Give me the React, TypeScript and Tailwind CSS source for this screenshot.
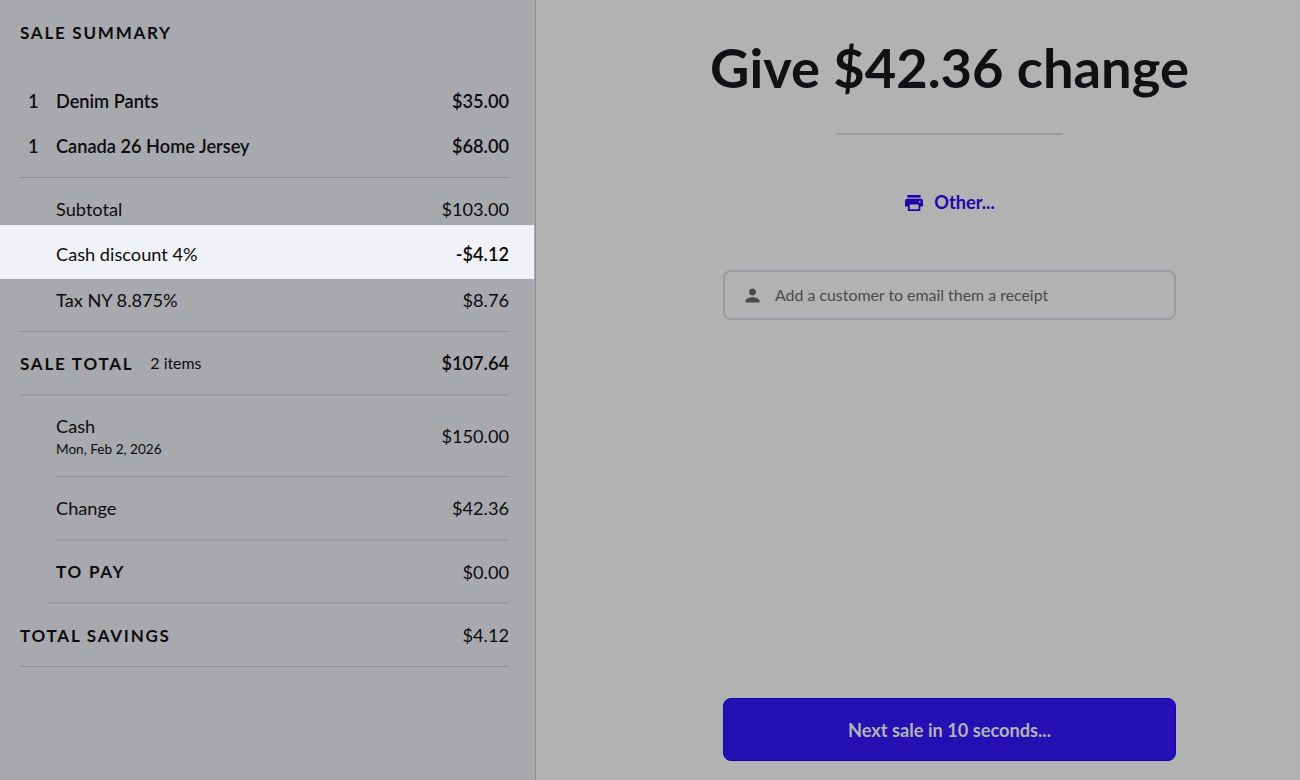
import type { ReactNode } from 'react';

interface LineProps {
  label: ReactNode;
  amount: string;
  className: string;
  amountClassName?: string;
}

function Line({ label, amount, className, amountClassName = '' }: LineProps) {
  return (
    <div className={`flex items-center justify-between ${className}`}>
      <div>{label}</div>
      <span className={amountClassName}>{amount}</span>
    </div>
  );
}

interface Item {
  quantity: number;
  name: string;
  price: string;
}

const items: Item[] = [
  { quantity: 1, name: 'Denim Pants', price: '$35.00' },
  { quantity: 1, name: 'Canada 26 Home Jersey', price: '$68.00' },
];

function SaleSummary() {
  return (
    <section className="h-full w-[536px] shrink-0 border-r border-[#8e8f94] bg-[#a8a9ad] text-[18.2px] leading-[22px]">
      <h2 className="ml-5 pt-[22px] text-[17px] font-bold tracking-[1.75px]">SALE SUMMARY</h2>

      <div className="mr-[26px] ml-5 mt-[34px] h-[100px] border-b border-[#8c8d91]">
        {items.map((item) => (
          <div key={item.name} className="flex h-[45px] items-center font-semibold">
            <span className="w-9 pl-2">{item.quantity}</span>
            <span className="grow">{item.name}</span>
            <span>{item.price}</span>
          </div>
        ))}
      </div>

      <Line label="Subtotal" amount="$103.00" className="mr-[26px] ml-14 h-[47px] pt-3.5" />
      <Line
        label="Cash discount 4%"
        amount="-$4.12"
        className="mr-px h-[54px] bg-[#f1f2f8] pt-1 pr-[25px] pl-14"
        amountClassName="font-semibold"
      />
      <Line
        label="Tax NY 8.875%"
        amount="$8.76"
        className="mr-[26px] ml-5 h-[53px] border-b border-[#8c8d91] pb-[11px] pl-9"
      />
      <Line
        label={
          <div className="flex items-center">
            <span className="pt-px text-[17px] font-bold tracking-[1.75px]">SALE TOTAL</span>
            <span className="ml-[17px] text-[15.9px]">2 items</span>
          </div>
        }
        amount="$107.64"
        className="mr-[26px] ml-5 h-16 border-b-2 border-[#9a9b9f]"
        amountClassName="font-semibold"
      />
      <Line
        label={
          <div className="pt-[3px]">
            <div>Cash</div>
            <div className="pt-px text-[13.6px]">Mon, Feb 2, 2026</div>
          </div>
        }
        amount="$150.00"
        className="mr-[26px] ml-14 h-[81px] border-b border-[#8c8d91]"
      />
      <Line
        label="Change"
        amount="$42.36"
        className="mr-[26px] ml-14 h-16 border-b-2 border-[#9a9b9f]"
      />
      <Line
        label={<span className="text-[17px] font-bold tracking-[1.75px]">TO PAY</span>}
        amount="$0.00"
        className="mr-[26px] ml-12 h-[63px] border-b-2 border-[#9a9b9f] pl-2"
      />
      <Line
        label={<span className="text-[17px] font-bold tracking-[1.75px]">TOTAL SAVINGS</span>}
        amount="$4.12"
        className="mr-[26px] ml-5 h-[63px] border-b border-[#8c8d91]"
      />
    </section>
  );
}

function PrinterIcon() {
  return (
    <svg viewBox="0 0 18 16" className="h-4 w-[18px]" fill="currentColor" fillRule="evenodd">
      <path d="M2.2 0h13.4v2.6H2.2z" />
      <path d="M2.4 3.8h13.2A2.4 2.4 0 0 1 18 6.2v5.3h-2.7V16H2.9v-4.5H0V6.2a2.4 2.4 0 0 1 2.4-2.4zM4.7 9.6v4.6h8.8V9.6zM14.7 6a.9.9 0 1 0 0 1.8.9.9 0 0 0 0-1.8z" />
    </svg>
  );
}

function PersonIcon() {
  return (
    <svg viewBox="0 0 24 24" className="size-[21px]" fill="currentColor">
      <path d="M12 12c2.21 0 4-1.79 4-4s-1.79-4-4-4-4 1.79-4 4 1.79 4 4 4zm0 2c-2.67 0-8 1.34-8 4v2h16v-2c0-2.66-5.33-4-8-4z" />
    </svg>
  );
}

function ChangeDue() {
  return (
    <main className="flex h-full grow flex-col items-center pr-[37px] pl-[100px]">
      <h1 className="mt-8 text-[54.3px] leading-[70px] font-bold whitespace-nowrap text-[#111113]">
        Give $42.36 change
      </h1>
      <div className="mt-[31px] h-[2px] w-[227px] bg-[#9c9c9e]" />

      <button className="mt-[57px] flex h-[22px] items-center gap-[11px] pl-px text-[18.2px] font-bold text-[#1e05ad]">
        <PrinterIcon />
        Other...
      </button>

      <div className="mt-[56px] flex h-[50px] w-[453px] items-center gap-3 rounded-lg border-2 border-[#9b9b9f] pl-[17px] text-[15.9px] text-[#49494c]">
        <PersonIcon />
        Add a customer to email them a receipt
      </div>

      <button className="mt-auto mb-[19px] h-[63px] w-[453px] rounded-lg border border-[#1a00b3] bg-[#260fb3] pt-[3px] text-[18.2px] font-bold text-[#b3b3b3]">
        Next sale in 10 seconds...
      </button>
    </main>
  );
}

export default function App() {
  return (
    <div className="flex h-[780px] w-[1300px] overflow-hidden bg-[#b2b2b2] font-['Lato',sans-serif] text-[#0c0c0e]">
      <SaleSummary />
      <ChangeDue />
    </div>
  );
}
